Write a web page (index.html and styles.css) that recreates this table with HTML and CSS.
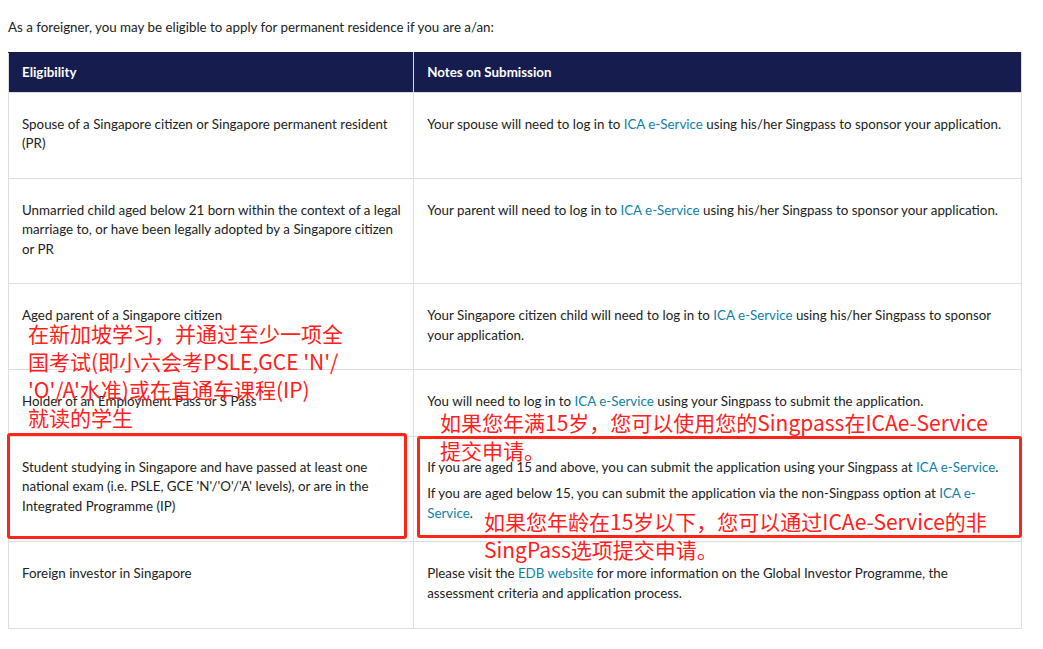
FILE: index.html
```html
<!DOCTYPE html>
<html lang="en">
<head>
    <meta charset="UTF-8">
    <meta name="viewport" content="width=device-width, initial-scale=1.0">
    <title>Permanent Residence Eligibility</title>
    <link rel="stylesheet" href="styles.css">
</head>
<body>

    <div class="page">
        <p class="intro">As a foreigner, you may be eligible to apply for permanent residence if you are a/an:</p>

        <table class="elig">
            <thead>
                <tr>
                    <th class="col-left">Eligibility</th>
                    <th>Notes on Submission</th>
                </tr>
            </thead>
            <tbody>
                <tr>
                    <td>Spouse of a Singapore citizen or Singapore permanent resident (PR)</td>
                    <td><p>Your spouse will need to log in to <a href="#">ICA e-Service</a> using his/her Singpass to sponsor your application.</p></td>
                </tr>
                <tr>
                    <td>Unmarried child aged below 21 born within the context of a legal marriage to, or have been legally adopted by a Singapore citizen or PR</td>
                    <td><p>Your parent will need to log in to <a href="#">ICA e-Service</a> using his/her Singpass to sponsor your application.</p></td>
                </tr>
                <tr>
                    <td>Aged parent of a Singapore citizen</td>
                    <td><p>Your Singapore citizen child will need to log in to <a href="#">ICA e-Service</a> using his/her Singpass to sponsor your application.</p></td>
                </tr>
                <tr>
                    <td>Holder of an Employment Pass or S Pass</td>
                    <td><p>You will need to log in to <a href="#">ICA e-Service</a> using your Singpass to submit the application.</p></td>
                </tr>
                <tr class="multi">
                    <td>Student studying in Singapore and have passed at least one national exam (i.e. PSLE, GCE 'N'/'O'/'A' levels), or are in the Integrated Programme (IP)</td>
                    <td>
                        <p>If you are aged 15 and above, you can submit the application using your Singpass at <a href="#">ICA e-Service</a>.</p>
                        <p>If you are aged below 15, you can submit the application via the non-Singpass option at <a href="#">ICA e-Service</a>.</p>
                    </td>
                </tr>
                <tr class="last">
                    <td>Foreign investor in Singapore</td>
                    <td><p>Please visit the <a href="#">EDB website</a> for more information on the Global Investor Programme, the assessment criteria and application process.</p></td>
                </tr>
            </tbody>
        </table>

        <!-- annotations drawn on top of the screenshot -->
        <div class="mark mark-left"></div>
        <div class="mark mark-right"></div>

        <div class="note note-left">在新加坡学习，并通过至少一项全<br>国考试(即小六会考PSLE,GCE 'N'/<br>'O'/A'水准)或在直通车课程(IP)<br>就读的学生</div>
        <div class="note note-top">如果您年满15岁，您可以使用您的Singpass在ICAe-Service<br>提交申请。</div>
        <div class="note note-bottom">如果您年龄在15岁以下，您可以通过ICAe-Service的非<br>SingPass选项提交申请。</div>
    </div>

</body>
</html>
```

FILE: styles.css
```css
body { margin: 0; font-family: Lato, "Noto Sans", sans-serif; font-size: 13.35px; color: #222; background: #fff; }
.page { position: relative; padding: 0 8px 20px; }
.intro { margin: 0; padding: 18px 0 14px; line-height: 19.5px; }

.elig { width: 1014px; border-collapse: collapse; line-height: 19.5px; }
.elig th { background: #161c4e; color: #fff; text-align: left; font-weight: 700; padding: 10px 13px 9px; height: 20px; border: 1px solid #ddd; border-top-color: #161c4e; }
.elig th.col-left { width: 40%; }
.elig td { vertical-align: top; padding: 22px 8px 24px 13px; border: 1px solid #ddd; }
.elig td p { margin: 0; }
.elig .multi td { padding-top: 21px; padding-bottom: 18px; }
.elig .multi td p + p { margin-top: 7px; }
.elig .last td { padding-bottom: 25px; }
.elig a { color: #0f7fa6; text-decoration: none; }

.mark { position: absolute; border: 3px solid #ff2418; border-radius: 3px; box-sizing: border-box; }
.mark-left { left: 7px; top: 433px; width: 400px; height: 106px; }
.mark-right { left: 417px; top: 436px; width: 605px; height: 102px; }

.note { position: absolute; color: #ff2020; font-family: "Noto Sans CJK SC", "Noto Sans", sans-serif; font-size: 21px; line-height: 28px; white-space: nowrap; }
.note-left { left: 28px; top: 319px; }
.note-top { left: 440px; top: 408px; }
.note-bottom { left: 484px; top: 507px; }
```
